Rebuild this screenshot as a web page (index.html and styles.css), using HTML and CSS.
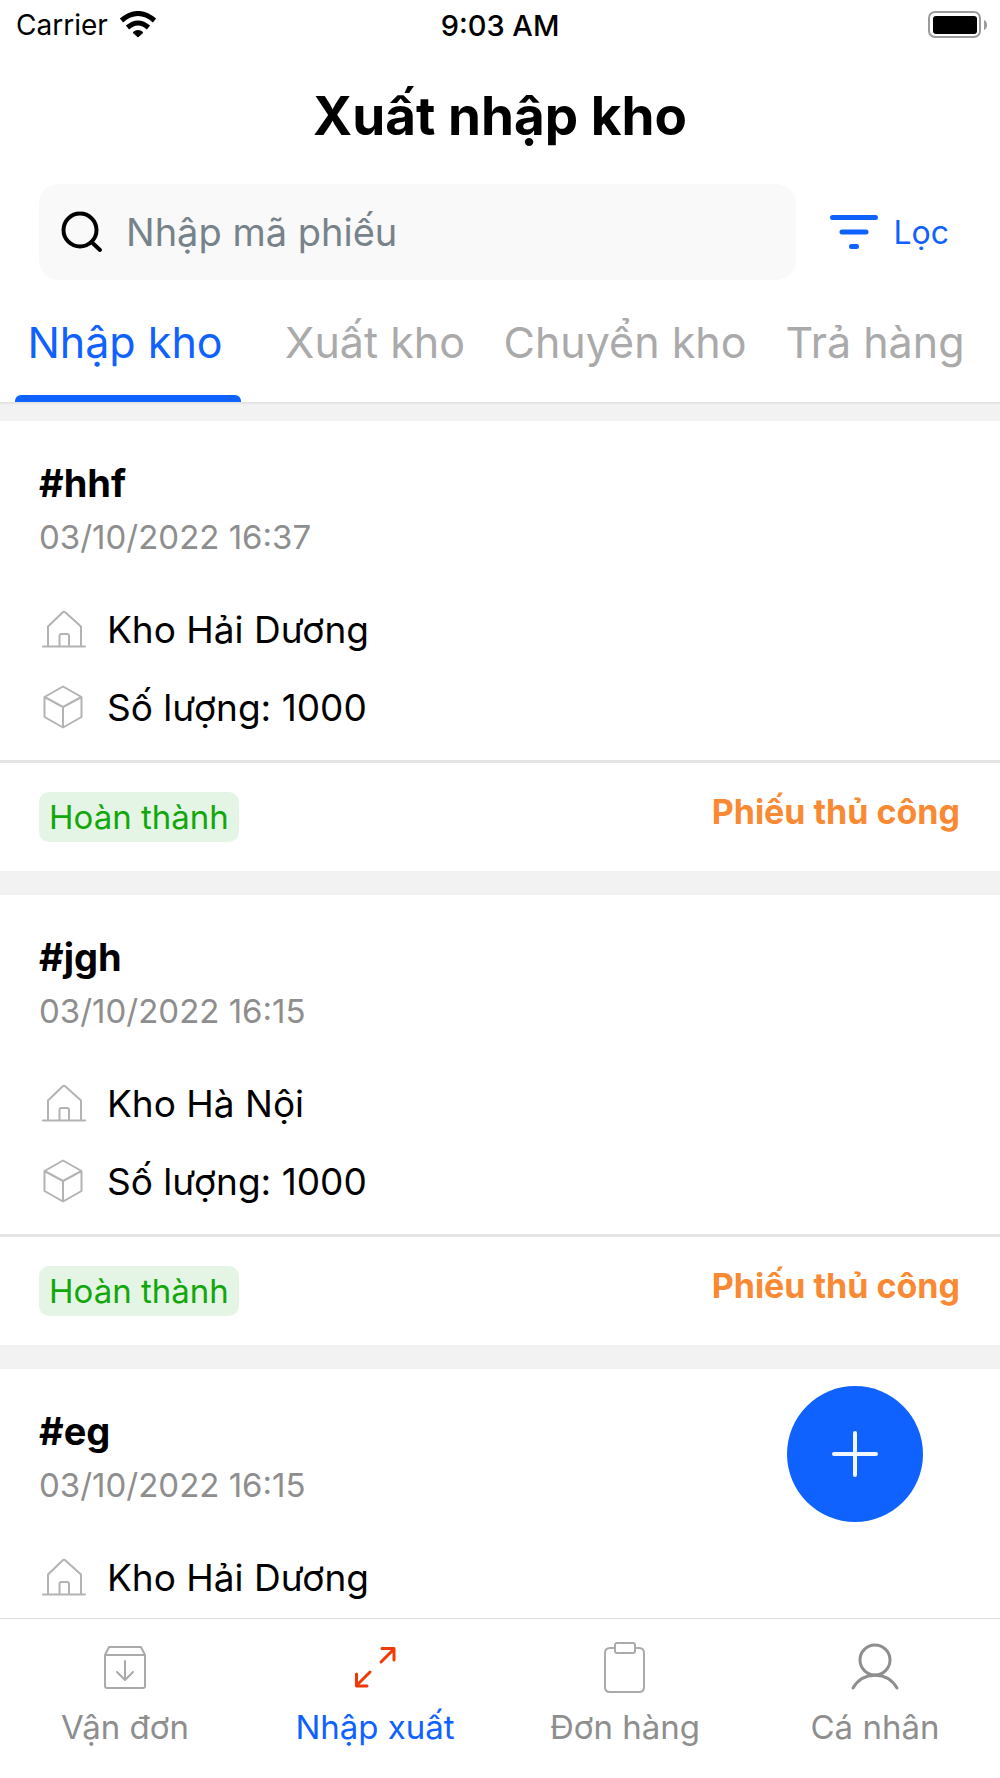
FILE: index.html
```html
<!DOCTYPE html>
<html lang="vi">
<head>
<meta charset="utf-8">
<meta name="viewport" content="width=device-width, initial-scale=1">
<title>Xuất nhập kho</title>
<link rel="stylesheet" href="styles.css">
</head>
<body>
<svg class="sprite" aria-hidden="true">
  <symbol id="house" viewBox="0 0 44 38" fill="none" stroke="currentColor" stroke-width="2" stroke-linecap="round" stroke-linejoin="round">
    <path d="M1 36.500H43M6 36V16.500L20.500 2.500Q22 1 23.500 2.500L39 16.500V36M17.500 36V26Q17.500 24 19.500 24H25Q27 24 27 26V36"/>
  </symbol>
  <symbol id="box" viewBox="0 0 44 44" fill="none" stroke="currentColor" stroke-width="2" stroke-linejoin="round">
    <path d="M21 1.500L39.500 12V32L21 42.500L2.500 32V12ZM2.500 12L21 22L39.500 12M21 22V42.500"/>
  </symbol>
</svg>
<div class="app">
  <div class="status">
    <span class="carrier">Carrier
      <svg width="38" height="28" viewBox="0 0 38 28" aria-hidden="true">
        <path d="M19 26L14 21.500Q19 17.500 24 21.500Z" stroke="#000" stroke-linejoin="round"/>
        <path d="M8.500 16.500Q19 7.500 29.500 16.500M2.500 9.500Q19 -4.500 35.500 9.500" fill="none" stroke="#000" stroke-width="5"/>
      </svg>
    </span>
    <span class="time">9:03 AM</span>
    <svg class="battery" width="60" height="28" viewBox="0 0 60 28" aria-hidden="true">
      <rect x="1" y="1" width="51" height="25" rx="6" fill="none" stroke="#9b9b9b" stroke-width="2"/>
      <rect x="5" y="5" width="44" height="18" rx="3"/>
      <path d="M56 9Q59 10 59 14T56 19Z" fill="#9b9b9b"/>
    </svg>
  </div>
  <header class="header">
    <h1>Xuất nhập kho</h1>
    <div class="tools">
      <label class="search">
        <svg width="42" height="42" viewBox="0 0 42 42" fill="none" stroke="#000" stroke-width="4" stroke-linecap="round" aria-hidden="true"><circle cx="19" cy="19" r="16.500"/><path d="M30.500 31L39 39"/></svg>
        <input type="text" placeholder="Nhập mã phiếu" aria-label="Nhập mã phiếu">
      </label>
      <button class="filter" type="button">
        <svg width="48" height="34" viewBox="0 0 48 34" stroke="currentColor" stroke-width="5" stroke-linecap="round" aria-hidden="true"><path d="M2.500 2.500H45.500M12 17H36M21.500 31.500H26.500"/></svg>
        Lọc
      </button>
    </div>
    <nav class="tabs">
      <a class="tab active" href="#nhap">Nhập kho</a>
      <a class="tab" href="#xuat">Xuất kho</a>
      <a class="tab" href="#chuyen">Chuyển kho</a>
      <a class="tab" href="#tra">Trả hàng</a>
    </nav>
  </header>
  <main class="content">
    <div class="list">
      <article class="card">
        <div class="info">
          <h2>#hhf</h2>
          <time>03/10/2022 16:37</time>
          <p class="row"><svg class="house"><use href="#house"/></svg>Kho Hải Dương</p>
          <p class="row"><svg class="box"><use href="#box"/></svg>Số lượng: 1000</p>
        </div>
        <div class="foot"><span class="tag">Hoàn thành</span><span class="kind">Phiếu thủ công</span></div>
      </article>
      <article class="card">
        <div class="info">
          <h2>#jgh</h2>
          <time>03/10/2022 16:15</time>
          <p class="row"><svg class="house"><use href="#house"/></svg>Kho Hà Nội</p>
          <p class="row"><svg class="box"><use href="#box"/></svg>Số lượng: 1000</p>
        </div>
        <div class="foot"><span class="tag">Hoàn thành</span><span class="kind">Phiếu thủ công</span></div>
      </article>
      <article class="card">
        <div class="info">
          <h2>#eg</h2>
          <time>03/10/2022 16:15</time>
          <p class="row"><svg class="house"><use href="#house"/></svg>Kho Hải Dương</p>
        </div>
      </article>
    </div>
    <button class="add" type="button" aria-label="Thêm phiếu">
      <svg width="46" height="46" viewBox="0 0 46 46" stroke="#fff" stroke-width="4" stroke-linecap="round" stroke-opacity=".95"><path d="M2 23H44M23 2V44"/></svg>
    </button>
  </main>
  <nav class="bottom">
    <a href="#van-don">
      <svg width="52" height="52" viewBox="0 0 52 52" fill="none" stroke="#aaa" stroke-width="2" stroke-linecap="round" stroke-linejoin="round" aria-hidden="true"><path d="M6 13V44Q6 46 8 46H44Q46 46 46 44V13L42 5H10L6 13H46M26 19V37M18 30L26 38L34 30"/></svg>
      Vận đơn
    </a>
    <a class="active" href="#nhap-xuat">
      <svg width="52" height="52" viewBox="0 0 52 52" fill="none" stroke="#ee3a06" stroke-width="3" stroke-linecap="round" stroke-linejoin="round" aria-hidden="true"><path d="M32 20L44 8M33 6.500H45V18M21 30L9 42M7.500 32V44H18"/></svg>
      Nhập xuất
    </a>
    <a href="#don-hang">
      <svg width="52" height="52" viewBox="0 0 52 52" fill="none" stroke="#aaa" stroke-width="2" stroke-linejoin="round" aria-hidden="true"><path d="M16 6H11Q6 6 6 11V45Q6 50 11 50H40Q45 50 45 45V11Q45 6 40 6H35"/><rect x="16" y="1" width="20" height="10" rx="2"/></svg>
      Đơn hàng
    </a>
    <a href="#ca-nhan">
      <svg width="52" height="52" viewBox="0 0 52 52" fill="none" stroke="#8e8e8e" stroke-width="3" stroke-linecap="round" aria-hidden="true"><circle cx="26" cy="18" r="15"/><path d="M4 46C14 29 38 29 48 46"/></svg>
      Cá nhân
    </a>
  </nav>
</div>
</body>
</html>
```
FILE: styles.css
```css
* { box-sizing: border-box; }
body { margin: 0; background: #fff; color: #000; font-family: Inter, "Noto Sans", sans-serif; }
h1, h2, p { margin: 0; }
a { color: inherit; text-decoration: none; }
button { border: 0; background: none; padding: 0; font: inherit; cursor: pointer; }
svg { display: block; flex: none; }
.sprite { display: none; }

.app { display: flex; flex-direction: column; height: 100vh; }

.status { display: grid; grid-template-columns: 1fr auto 1fr; align-items: center; height: 50px; padding: 0 12px; font-size: 28px; }
.carrier { display: flex; align-items: center; gap: 11px; padding-left: 4px; }
.time { font-size: 29px; font-weight: 500; }
.battery { justify-self: end; }

h1 { padding-top: 34px; font-size: 53px; line-height: 64px; font-weight: 700; text-align: center; }
.tools { display: flex; align-items: center; gap: 34px; padding: 36px 51px 0 39px; }
.search { display: flex; flex: 1; align-items: center; gap: 23px; height: 96px; padding: 0 22px; border-radius: 20px; background: #f9f9f9; }
.search input { flex: 1; min-width: 0; border: 0; outline: 0; background: none; padding: 0; font: inherit; font-size: 38px; }
.search input::placeholder { color: #77838b; opacity: 1; }
.filter { display: flex; align-items: center; gap: 15px; color: #0f62fe; font-size: 32px; }

.tabs { display: grid; grid-template-columns: repeat(4, 1fr); }
.tab { position: relative; height: 122px; line-height: 124px; text-align: center; white-space: nowrap; font-size: 43px; color: #aaa; }
.tab.active { color: #0f62fe; }
.tab.active::after { content: ""; position: absolute; left: 15px; right: 9px; bottom: 0; height: 7px; border-radius: 6px 6px 0 0; background: #0f62fe; }

.content { position: relative; flex: 1; min-height: 0; }
.list { display: flex; flex-direction: column; gap: 24px; height: 100%; overflow: hidden; padding-top: 19px; background: linear-gradient(#dedede, #f2f2f2 3px); }
.card { flex: none; background: #fff; }
.info { padding: 36px 39px 21px; }
h2 { font-size: 38px; line-height: 52px; font-weight: 700; }
time { display: block; margin-bottom: 32px; font-size: 33px; line-height: 56px; color: #8e8e8e; }
.row { display: flex; align-items: center; height: 64px; gap: 21px; padding-left: 3px; font-size: 37px; }
.row + .row { margin-top: 14px; }
.row svg { width: 44px; color: #b3b3b3; }
.house { height: 38px; }
.box { height: 44px; }
.foot { display: flex; justify-content: space-between; align-items: flex-start; padding: 29px 40px 29px 39px; border-top: 3px solid #e4e4e4; font-size: 33px; }
.tag { padding: 0 10px; border-radius: 10px; background: #e5f5e5; color: #12a70b; line-height: 50px; }
.kind { font-size: 34px; line-height: 40px; font-weight: 700; color: #f98a33; }

.add { position: absolute; right: 77px; bottom: 96px; display: grid; place-items: center; width: 136px; height: 136px; border-radius: 50%; background: #0f62fe; }

.bottom { display: grid; grid-template-columns: repeat(4, 1fr); height: 160px; padding-top: 23px; border-top: 1px solid #dedede; font-size: 33px; line-height: 40px; color: #8e8e8e; }
.bottom a { display: flex; flex-direction: column; align-items: center; gap: 13px; }
.bottom .active { color: #0f62fe; }
```
